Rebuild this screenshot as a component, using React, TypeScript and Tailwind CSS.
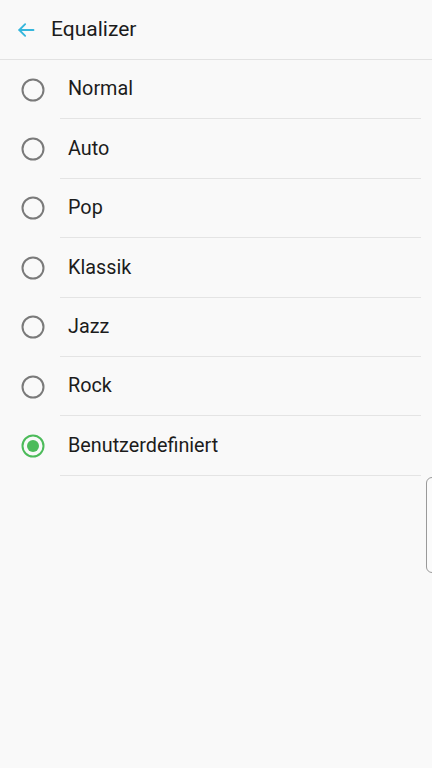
import React from "react";

const options = ["Normal", "Auto", "Pop", "Klassik", "Jazz", "Rock", "Benutzerdefiniert"];

function Radio({ checked }: { checked: boolean }) {
  return (
    <svg width="26" height="26" viewBox="0 0 26 26">
      <circle cx="13" cy="13" r="10.5" fill="none" stroke={checked ? "#4cbb5a" : "#7a7a7a"} strokeWidth="2" />
      {checked && <circle cx="13" cy="13" r="6" fill="#4cbb5a" />}
    </svg>
  );
}

export default function App() {
  const selected = 6;
  return (
    <div className="relative w-[432px] h-[768px] bg-[#f9f9f9] overflow-hidden font-['Roboto',sans-serif] text-[#1c1c1c]">
      <div className="h-[60px] flex items-center border-b border-[#e2e2e2]">
        <div className="w-[51px] flex justify-center pl-[1px]">
          <svg width="20" height="20" viewBox="0 0 24 24" fill="none" stroke="#35b6dc" strokeWidth="2.2" strokeLinecap="round" strokeLinejoin="round">
            <path d="M21 12H4" />
            <path d="M11 5l-7 7 7 7" />
          </svg>
        </div>
        <span className="text-[21px] leading-none">Equalizer</span>
      </div>
      <div className="flex flex-col">
        {options.map((o, i) => (
          <div key={o} className="h-[59.4px] flex">
            <div className="w-[60px] flex items-center justify-center pl-[6px]">
              <Radio checked={i === selected} />
            </div>
            <div className="flex-1 mr-[11px] flex items-center border-b border-[#e4e4e4] pl-[8px] text-[19.8px]">
              {o}
            </div>
          </div>
        ))}
      </div>
      <div className="absolute right-[-6px] top-[477px] w-[12px] h-[96px] rounded-[6px] border border-[#9a9a9a] bg-[#fbfbfb]" />
    </div>
  );
}
